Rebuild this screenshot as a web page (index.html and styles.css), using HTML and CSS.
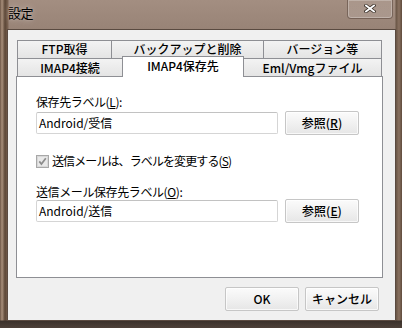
FILE: index.html
```html
<!DOCTYPE html>
<html lang="ja">
<head>
<meta charset="utf-8">
<link rel="stylesheet" href="styles.css">
</head>
<body>
<div class="window">
  <div class="titlebar">
    <span class="title">設定</span>
    <div class="close">
      <svg width="12" height="9" viewBox="0 0 12 9">
        <path d="M2 1.5 L10 7.5 M10 1.5 L2 7.5" stroke="#3a3028" stroke-width="3.4" stroke-linecap="square"/>
        <path d="M2 1.5 L10 7.5 M10 1.5 L2 7.5" stroke="#ffffff" stroke-width="1.8" stroke-linecap="square"/>
      </svg>
    </div>
  </div>
  <div class="client">
    <div class="tabs">
      <div class="tabrow">
        <div class="tab w1">FTP取得</div>
        <div class="tab w2">バックアップと削除</div>
        <div class="tab w3">バージョン等</div>
      </div>
      <div class="tabrow front">
        <div class="tab w4">IMAP4接続</div>
        <div class="tab w5 sel">IMAP4保存先</div>
        <div class="tab w6">Eml/Vmgファイル</div>
      </div>
    </div>
    <div class="panel">
      <div class="label">保存先ラベル(<u>L</u>):</div>
      <div class="field-row r1">
        <div class="input">Android/受信</div>
        <div class="btn">参照(<u>R</u>)</div>
      </div>
      <div class="check-row">
        <span class="checkbox">
          <svg width="13" height="13" viewBox="0 0 13 13">
            <rect x="0.5" y="0.5" width="12" height="12" fill="#f4f4f4" stroke="#a8a8a8"/>
            <rect x="1.5" y="1.5" width="10" height="10" fill="#e9e9e9" stroke="#d8d8d8"/>
            <path d="M3.3 6.4 L5.4 9 L9.8 3.2" fill="none" stroke="#8c8c8c" stroke-width="1.7"/>
          </svg>
        </span>
        <span class="check-text">送信メールは、ラベルを変更する(<u>S</u>)</span>
      </div>
      <div class="label l2">送信メール保存先ラベル(<u>O</u>):</div>
      <div class="field-row r2">
        <div class="input">Android/送信</div>
        <div class="btn">参照(<u>E</u>)</div>
      </div>
    </div>
    <div class="footer">
      <div class="btn">OK</div>
      <div class="btn">キャンセル</div>
    </div>
  </div>
</div>
</body>
</html>
```

FILE: styles.css
```css
html, body {
  margin: 0;
  padding: 0;
}
body {
  width: 402px;
  height: 328px;
  overflow: hidden;
  font-family: "Noto Sans CJK JP", "Noto Sans", sans-serif;
  font-size: 12px;
  color: #000;
}
.window {
  width: 402px;
  height: 328px;
  box-sizing: border-box;
  padding-left: 8px;
  background:
    linear-gradient(180deg, rgba(0,0,0,0) 0px, rgba(0,0,0,0) 320px, #3b312b 321px, #4c4038 328px),
    linear-gradient(90deg, #6c5545 0px, #a88f7b 2px, #5b4636 5px, #7b6352 8px, rgba(0,0,0,0) 9px, rgba(0,0,0,0) 395px, #6a5646 396px, #8a7261 399px, #5e4a3c 402px),
    linear-gradient(180deg, #a38e81 0px, #988376 30px, #8f7b6e 200px, #8a7568 328px);
}
.titlebar {
  height: 30px;
  display: flex;
  align-items: flex-start;
}
.title {
  font-size: 13px;
  line-height: 16px;
  margin-top: 5px;
  letter-spacing: -0.5px;
  text-shadow: 0 0 6px rgba(255,255,255,0.45), 0 0 2px rgba(255,255,255,0.3);
}
.close {
  margin-left: auto;
  margin-right: 9px;
  width: 46px;
  height: 19px;
  box-sizing: border-box;
  border: 1px solid rgba(80,60,50,0.55);
  border-top: none;
  border-radius: 0 0 4px 4px;
  box-shadow: inset 0 0 0 1px rgba(255,255,255,0.25);
  background: linear-gradient(180deg, rgba(255,255,255,0.08), rgba(255,255,255,0.14));
  display: flex;
  align-items: center;
  justify-content: center;
}
.close svg { display: block; margin-top: -1px; }
.client {
  width: 387px;
  height: 290px;
  box-sizing: border-box;
  background: #f0f0f0;
  box-shadow: 0 0 0 1px #5a4a40;
  padding-top: 10px;
  display: flex;
  flex-direction: column;
}
.tabs {
  margin-left: 9px;
  position: relative;
  z-index: 2;
}
.tabrow {
  display: flex;
  height: 19px;
  align-items: flex-start;
}
.tabrow.front {
  margin-top: -1px;
}
.tab {
  box-sizing: border-box;
  height: 19px;
  border: 1px solid #8e8f94;
  background: linear-gradient(180deg, #f2f2f2 0%, #ebebeb 50%, #dcdcdc 51%, #cfcfcf 100%);
  background: linear-gradient(180deg, #f3f3f3, #e4e4e4);
  text-align: center;
  line-height: 16px;
  font-size: 12px;
  font-weight: 500;
  white-space: nowrap;
}
.tab + .tab { margin-left: -1px; }
.w1 { width: 95px; }
.w2 { width: 153px; }
.w3 { width: 119px; }
.w4 { width: 106px; line-height: 17px; }
.w5 { width: 122px; }
.w6 { width: 139px; line-height: 17px; }
.tab.sel {
  height: 21px;
  margin-top: -2px;
  border-bottom: none;
  background: #ffffff;
  position: relative;
  z-index: 3;
  line-height: 16px;
  padding-top: 1px;
}
.panel {
  margin-left: 8px;
  margin-top: -1px;
  width: 367px;
  height: 202px;
  box-sizing: border-box;
  border: 1px solid #8e8f94;
  background: #ffffff;
  padding: 17px 0 0 19px;
  position: relative;
  z-index: 1;
}
.label {
  line-height: 16px;
  white-space: nowrap;
  letter-spacing: -0.4px;
}
.label.l2 { margin-top: 15px; }
.field-row {
  display: flex;
  align-items: center;
  gap: 7px;
  height: 24px;
}
.field-row.r1 { margin-top: 1px; }
.field-row.r2 { margin-top: -1px; }
.input {
  width: 242px;
  height: 22px;
  box-sizing: border-box;
  border: 1px solid #d5d5d5;
  border-top-color: #c2c2c2;
  border-radius: 2px;
  background: #fff;
  padding-left: 2px;
  line-height: 19px;
  white-space: nowrap;
}
.btn {
  width: 74px;
  height: 24px;
  box-sizing: border-box;
  border: 1px solid #c6c6c6;
  border-radius: 2px;
  background: linear-gradient(180deg, #fbfbfb 0%, #f1f1f1 50%, #e6e6e6 100%);
  box-shadow: inset 0 0 0 1px rgba(255,255,255,0.7);
  text-align: center;
  line-height: 21px;
  white-space: nowrap;
  font-weight: 500;
}
u {
  text-decoration: underline;
  text-underline-offset: 1px;
}
.check-row {
  display: flex;
  align-items: center;
  height: 16px;
  margin-top: 18px;
  gap: 3px;
}
.checkbox { display: block; height: 13px; }
.checkbox svg { display: block; }
.check-text {
  line-height: 16px;
  white-space: nowrap;
  letter-spacing: -0.9px;
}
.footer {
  display: flex;
  justify-content: flex-end;
  gap: 6px;
  margin-top: 9px;
  margin-right: 16px;
}
```
